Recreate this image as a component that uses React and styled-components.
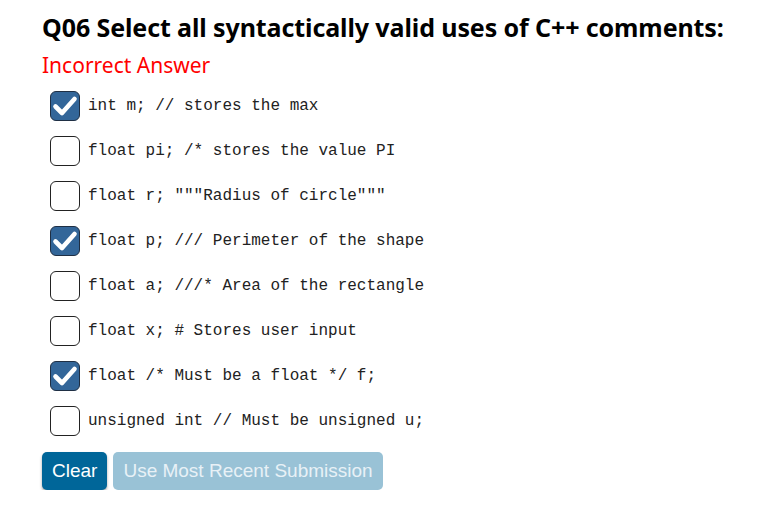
import React from 'react';
import styled, { createGlobalStyle } from 'styled-components';

const GlobalStyle = createGlobalStyle`
  body {
    margin: 0;
    background: #ffffff;
    font-family: "Noto Sans", sans-serif;
  }
`;

const options = [
  { text: 'int m; // stores the max', checked: true },
  { text: 'float pi; /* stores the value PI', checked: false },
  { text: 'float r; """Radius of circle"""', checked: false },
  { text: 'float p; /// Perimeter of the shape', checked: true },
  { text: 'float a; ///* Area of the rectangle', checked: false },
  { text: 'float x; # Stores user input', checked: false },
  { text: 'float /* Must be a float */ f;', checked: true },
  { text: 'unsigned int // Must be unsigned u;', checked: false },
];

const App = () => (
  <>
    <GlobalStyle />
    <Page>
      <Title>Q06 Select all syntactically valid uses of C++ comments:</Title>
      <Status>Incorrect Answer</Status>
      <List>
        {options.map(opt => (
          <Row key={opt.text}>
            <Box checked={opt.checked}>
              {opt.checked && (
                <svg width="26" height="22" viewBox="0 0 26 22">
                  <path
                    d="M3.5 11.5 L10 18 L22.5 4"
                    fill="none"
                    stroke="#ffffff"
                    strokeWidth="4.6"
                    strokeLinecap="round"
                    strokeLinejoin="round"
                  />
                </svg>
              )}
            </Box>
            <Code>{opt.text}</Code>
          </Row>
        ))}
      </List>
      <Buttons>
        <Button>Clear</Button>
        <Button disabledLook>Use Most Recent Submission</Button>
      </Buttons>
    </Page>
  </>
);

export default App;

const Page = styled.div`
  padding: 10px 0 0 42px;
`;

const Title = styled.h2`
  margin: 0;
  font-family: "Noto Sans", sans-serif;
  font-weight: 700;
  font-size: 25px;
  line-height: 34px;
  color: #000000;
  letter-spacing: -0.1px;
`;

const Status = styled.div`
  margin-top: 8px;
  font-family: "Noto Sans", sans-serif;
  font-size: 21px;
  line-height: 26px;
  color: #ff0000;
`;

const List = styled.div`
  display: flex;
  flex-direction: column;
  gap: 15px;
  margin-top: 13px;
  padding-left: 8px;
`;

const Row = styled.div`
  display: flex;
  align-items: center;
  gap: 8px;
  height: 30px;
`;

const Box = styled.div`
  width: 30px;
  height: 30px;
  box-sizing: border-box;
  border-radius: 6px;
  border: 1px solid ${p => (p.checked ? '#1f2f44' : '#222222')};
  background: ${p => (p.checked ? '#336699' : '#ffffff')};
  display: flex;
  align-items: center;
  justify-content: center;
`;

const Code = styled.span`
  font-family: "Liberation Mono", monospace;
  font-size: 16px;
  color: #222222;
`;

const Buttons = styled.div`
  display: flex;
  gap: 6px;
  margin-top: 16px;
`;

const Button = styled.button`
  font-family: "Liberation Sans", Arial, sans-serif;
  font-size: 19px;
  height: 38px;
  padding: 0 10px;
  border: none;
  border-radius: 5px;
  color: ${p => (p.disabledLook ? '#e8f1f6' : '#ffffff')};
  background: ${p => (p.disabledLook ? '#99c2d6' : '#006699')};
  box-shadow: ${p => (p.disabledLook ? 'none' : '0 2px 3px rgba(0,0,0,0.35)')};
`;
